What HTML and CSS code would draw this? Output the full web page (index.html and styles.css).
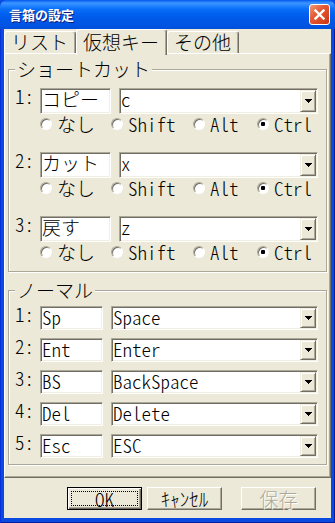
FILE: index.html
```html
<!DOCTYPE html>
<html lang="ja">

<head>
    <meta http-equiv="Content-Type" content="text/html; charset=UTF-8" />
    <title>言箱の設定</title>
    <link rel="stylesheet" href="styles.css">
</head>

<body>
    <div class="window">
        <div class="titlebar">
            <span class="title">言箱の設定</span>
            <span class="closeBtn">
                <svg width="11" height="11" viewBox="0 0 11 11">
                    <path d="M1.5 1.5L9.5 9.5M9.5 1.5L1.5 9.5" stroke="#fff" stroke-width="2.4" stroke-linecap="square" />
                </svg>
            </span>
        </div>
        <div class="frame">
            <div class="client">
                <div class="tabs">
                    <div class="tab">リスト</div>
                    <div class="tab active">仮想キー</div>
                    <div class="tab">その他</div>
                </div>

                <div class="page">
                    <fieldset class="group">
                        <legend>ショートカット</legend>
                        <div class="shortcutList">
                            <div class="shortcut">
                                <div class="keyRow">
                                    <span class="num">1:</span>
                                    <div class="edit nameEdit">コピー</div>
                                    <div class="combo"><span class="comboText">c</span><span class="dropBtn"><svg width="7" height="4"><path d="M0 0h7v1H0zM1 1h5v1H1zM2 2h3v1H2zM3 3h1v1H3z" /></svg></span></div>
                                </div>
                                <div class="modifiers">
                                    <span class="radio jp"><i></i>なし</span>
                                    <span class="radio"><i></i>Shift</span>
                                    <span class="radio"><i></i>Alt</span>
                                    <span class="radio on"><i></i>Ctrl</span>
                                </div>
                            </div>
                            <div class="shortcut">
                                <div class="keyRow">
                                    <span class="num">2:</span>
                                    <div class="edit nameEdit">カット</div>
                                    <div class="combo"><span class="comboText">x</span><span class="dropBtn"><svg width="7" height="4"><path d="M0 0h7v1H0zM1 1h5v1H1zM2 2h3v1H2zM3 3h1v1H3z" /></svg></span></div>
                                </div>
                                <div class="modifiers">
                                    <span class="radio jp"><i></i>なし</span>
                                    <span class="radio"><i></i>Shift</span>
                                    <span class="radio"><i></i>Alt</span>
                                    <span class="radio on"><i></i>Ctrl</span>
                                </div>
                            </div>
                            <div class="shortcut">
                                <div class="keyRow">
                                    <span class="num">3:</span>
                                    <div class="edit nameEdit">戻す</div>
                                    <div class="combo"><span class="comboText">z</span><span class="dropBtn"><svg width="7" height="4"><path d="M0 0h7v1H0zM1 1h5v1H1zM2 2h3v1H2zM3 3h1v1H3z" /></svg></span></div>
                                </div>
                                <div class="modifiers">
                                    <span class="radio jp"><i></i>なし</span>
                                    <span class="radio"><i></i>Shift</span>
                                    <span class="radio"><i></i>Alt</span>
                                    <span class="radio on"><i></i>Ctrl</span>
                                </div>
                            </div>
                        </div>
                    </fieldset>

                    <fieldset class="group normalGroup">
                        <legend>ノーマル</legend>
                        <div class="normalList">
                            <div class="keyRow small">
                                <span class="num">1:</span>
                                <div class="edit codeEdit">Sp</div>
                                <div class="combo"><span class="comboText">Space</span><span class="dropBtn"><svg width="7" height="4"><path d="M0 0h7v1H0zM1 1h5v1H1zM2 2h3v1H2zM3 3h1v1H3z" /></svg></span></div>
                            </div>
                            <div class="keyRow small">
                                <span class="num">2:</span>
                                <div class="edit codeEdit">Ent</div>
                                <div class="combo"><span class="comboText">Enter</span><span class="dropBtn"><svg width="7" height="4"><path d="M0 0h7v1H0zM1 1h5v1H1zM2 2h3v1H2zM3 3h1v1H3z" /></svg></span></div>
                            </div>
                            <div class="keyRow small">
                                <span class="num">3:</span>
                                <div class="edit codeEdit">BS</div>
                                <div class="combo"><span class="comboText">BackSpace</span><span class="dropBtn"><svg width="7" height="4"><path d="M0 0h7v1H0zM1 1h5v1H1zM2 2h3v1H2zM3 3h1v1H3z" /></svg></span></div>
                            </div>
                            <div class="keyRow small">
                                <span class="num">4:</span>
                                <div class="edit codeEdit">Del</div>
                                <div class="combo"><span class="comboText">Delete</span><span class="dropBtn"><svg width="7" height="4"><path d="M0 0h7v1H0zM1 1h5v1H1zM2 2h3v1H2zM3 3h1v1H3z" /></svg></span></div>
                            </div>
                            <div class="keyRow small">
                                <span class="num">5:</span>
                                <div class="edit codeEdit">Esc</div>
                                <div class="combo"><span class="comboText">ESC</span><span class="dropBtn"><svg width="7" height="4"><path d="M0 0h7v1H0zM1 1h5v1H1zM2 2h3v1H2zM3 3h1v1H3z" /></svg></span></div>
                            </div>
                        </div>
                    </fieldset>
                </div>

                <div class="buttons">
                    <div class="btn default"><span class="focus">OK</span></div>
                    <div class="btn">ｷｬﾝｾﾙ</div>
                    <div class="btn save jp">保存</div>
                </div>
            </div>
        </div>
    </div>
</body>

</html>
```

FILE: styles.css
```css
* {
    box-sizing: border-box;
}

body {
    margin: 0;
    font-family: "Noto Sans CJK JP", "DejaVu Sans Mono", monospace;
    font-size: 19px;
    font-weight: 300;
    font-feature-settings: "hwid"; /* half-width latin, like MS Gothic */
    color: #000;
}

.jp,
.tab,
.group legend,
.nameEdit,
.title {
    font-feature-settings: normal;
}

.window {
    width: 335px;
    height: 523px;
    display: flex;
    flex-direction: column;
    background: #0A4AE0;
}

/* title bar */
.titlebar {
    height: 29px;
    flex: none;
    display: flex;
    align-items: center;
    justify-content: space-between;
    padding: 0 5px 0 9px;
    border-radius: 7px 7px 0 0;
    background: linear-gradient(to bottom, #0058EE 0, #3D95FF 3px, #2B8AFF 5px, #0A6EF9 9px, #0061F0 14px, #0057E6 20px, #0054E3 25px, #0050DA 29px);
}
.title {
    color: #fff;
    font-weight: bold;
    font-size: 13px;
    line-height: 16px;
    text-shadow: 1px 1px 0 #0A1C7E;
}
.closeBtn {
    width: 21px;
    height: 21px;
    display: flex;
    align-items: center;
    justify-content: center;
    border: 1px solid #fff;
    border-radius: 3px;
    background: linear-gradient(135deg, #F39A78 0%, #E35A35 40%, #D8441F 75%, #C23512 100%);
}

.frame {
    flex: 1;
    padding: 0 4px 5px 4px;
    box-shadow: inset 1px 0 #0831D9, inset -1px 0 #001EA0, inset 0 -1px #001EA0;
}
.client {
    height: 100%;
    padding-top: 2px;
    background: #ECE9D8;
}

/* tabs */
.tabs {
    display: flex;
    align-items: flex-end;
    height: 22px;
}
.tab {
    height: 22px;
    padding: 0 7px 0 6px;
    line-height: 20px;
    border: 1px solid #fff;
    border-bottom: none;
    border-right-color: #716F64;
    border-radius: 3px 3px 0 0;
    box-shadow: inset -1px 0 #ACA899;
}
.tab.active {
    height: 26px;
    padding-top: 2px;
    margin-bottom: -2px;
    position: relative;
    background: #ECE9D8;
}

.page {
    height: 425px;
    padding: 5px 1px 0 1px;
    border: 1px solid;
    border-color: #fff #716F64 #716F64 #fff;
    box-shadow: inset -1px -1px #ACA899;
}

/* group boxes */
.group {
    margin: 0 2px;
    padding: 9px 8px 9px 6px;
    min-width: 0;
    border: 1px solid #ACA899;
    box-shadow: inset 1px 1px #fff, 1px 1px #fff;
}
.group legend {
    padding: 0 2px;
    line-height: 20px;
    background: #ECE9D8;
}
.normalGroup {
    margin-top: 8px;
    padding-top: 6px;
    padding-bottom: 6px;
}

.shortcutList {
    display: flex;
    flex-direction: column;
    gap: 18px;
}
.normalList {
    display: flex;
    flex-direction: column;
    gap: 8px;
}

.keyRow {
    display: flex;
    height: 26px;
}
.keyRow.small {
    height: 24px;
}
.num {
    width: 25px;
    line-height: 16px;
}

.edit,
.combo {
    background: #fff;
    border: 1px solid;
    border-color: #ACA899 #fff #fff #ACA899;
    box-shadow: inset 1px 1px #716F64, inset -1px -1px #F1EFE2;
    padding: 1px;
}
.edit {
    line-height: 18px;
    white-space: nowrap;
}
.nameEdit {
    width: 71px;
    margin-right: 8px;
}
.codeEdit {
    width: 63px;
    margin-right: 8px;
}
.combo {
    flex: 1;
    display: flex;
}
.comboText {
    flex: 1;
    line-height: 18px;
}
.dropBtn {
    width: 16px;
    display: flex;
    align-items: center;
    justify-content: center;
    background: #ECE9D8;
    border: 1px solid;
    border-color: #F1EFE2 #716F64 #716F64 #F1EFE2;
    box-shadow: inset 1px 1px #fff, inset -1px -1px #ACA899;
}

/* radio buttons */
.modifiers {
    display: grid;
    grid-template-columns: 71px 82px 64px auto;
    height: 20px;
    margin-left: 25px;
}
.radio {
    display: flex;
    align-items: center;
    gap: 5px;
    line-height: 20px;
}
.radio i {
    width: 12px;
    height: 12px;
    flex: none;
    border-radius: 50%;
    background: #fff;
    border: 1px solid;
    border-color: #ACA899 #fff #fff #ACA899;
    box-shadow: inset 1px 1px #716F64;
}
.radio.on i {
    background: radial-gradient(circle, #000 0 2px, #fff 2.5px);
}

/* buttons */
.buttons {
    display: flex;
    gap: 5px;
    padding-left: 63px;
    margin-top: 9px;
}
.btn {
    width: 75px;
    height: 23px;
    display: flex;
    align-items: center;
    justify-content: center;
    line-height: 18px;
    border: 1px solid;
    border-color: #fff #716F64 #716F64 #fff;
    box-shadow: inset -1px -1px #ACA899;
}
.btn.default {
    padding: 3px;
    border-color: #000;
    box-shadow: inset 1px 1px #fff, inset -1px -1px #716F64, inset -2px -2px #ACA899;
}
.btn .focus {
    flex: 1;
    height: 100%;
    display: flex;
    align-items: center;
    justify-content: center;
    border: 1px dotted #000;
}
.btn.save {
    margin-left: 14px;
    color: #ACA899;
    text-shadow: 1px 1px 0 #fff;
}
```
